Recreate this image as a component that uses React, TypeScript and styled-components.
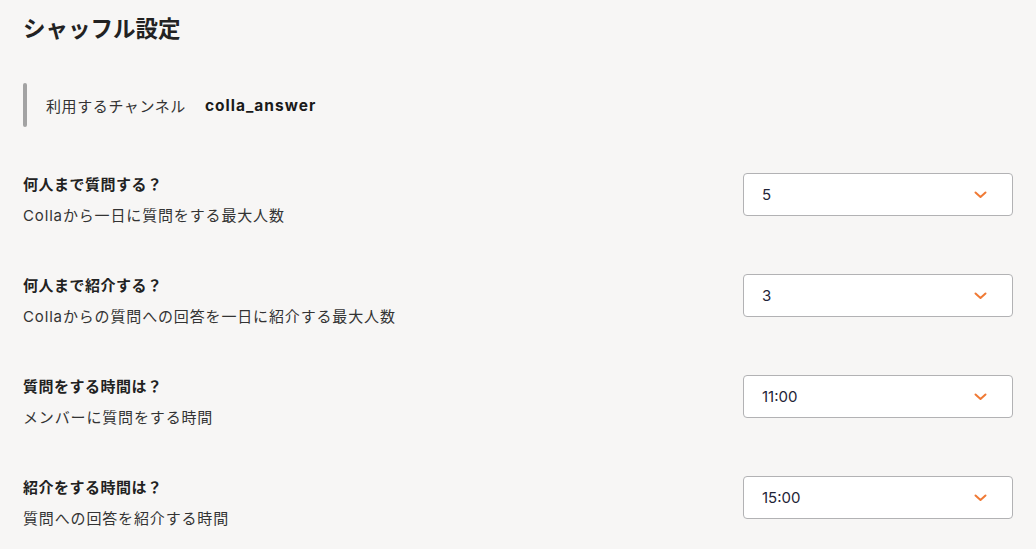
import styled, { createGlobalStyle } from 'styled-components';

const GlobalStyle = createGlobalStyle`
  html, body {
    margin: 0;
    padding: 0;
    background: #f7f6f5;
  }
  body {
    font-family: Inter, "Noto Sans CJK JP", sans-serif;
    color: #222;
  }
`;

const Page = styled.div`
  width: 1036px;
  height: 549px;
  box-sizing: border-box;
  padding: 13px 23px 0 23px;
  background: #f7f6f5;
  overflow: hidden;
`;

const Title = styled.h1`
  margin: 0;
  font-size: 22.5px;
  line-height: 32px;
  font-weight: 700;
  color: #222;
`;

const ChannelInfo = styled.div`
  margin-top: 38px;
  height: 44px;
  display: flex;
  align-items: center;
`;

const ChannelBar = styled.div`
  width: 4px;
  height: 44px;
  border-radius: 2px;
  background: #a3a3a3;
  margin-right: 19px;
`;

const ChannelLabel = styled.span`
  font-size: 15px;
  letter-spacing: 0.6px;
  color: #333;
`;

const ChannelName = styled.span`
  font-size: 15.5px;
  font-weight: 700;
  letter-spacing: 1px;
  color: #1a1a1a;
  margin-left: 19px;
`;

const SettingList = styled.div`
  margin-top: 46px;
  display: flex;
  flex-direction: column;
  gap: 47px;
`;

const SettingRow = styled.div`
  display: flex;
  justify-content: space-between;
  align-items: flex-start;
  height: 54px;
`;

const SettingText = styled.div`
  display: flex;
  flex-direction: column;
  gap: 7px;
`;

const SettingLabel = styled.div`
  font-size: 15px;
  line-height: 24px;
  font-weight: 700;
  letter-spacing: 0.5px;
  color: #222;
`;

const SettingDesc = styled.div`
  font-size: 15px;
  line-height: 24px;
  letter-spacing: 0.85px;
  color: #333;
`;

const Select = styled.div`
  width: 270px;
  height: 43px;
  box-sizing: border-box;
  border: 1px solid #b2b2b4;
  border-radius: 4px;
  background: #fff;
  display: flex;
  align-items: center;
  justify-content: space-between;
  padding: 0 25px 0 18px;
`;

const SelectValue = styled.span`
  font-size: 15px;
  color: #1f2437;
`;

const Chevron = () => (
  <svg width="13" height="8" viewBox="0 0 13 8" fill="none">
    <path d="M1.5 1.5 L6.5 6 L11.5 1.5" stroke="#f07a35" strokeWidth="2" strokeLinecap="round" strokeLinejoin="round" />
  </svg>
);

const settings = [
  { label: '何人まで質問する？', desc: 'Collaから一日に質問をする最大人数', value: '5' },
  { label: '何人まで紹介する？', desc: 'Collaからの質問への回答を一日に紹介する最大人数', value: '3' },
  { label: '質問をする時間は？', desc: 'メンバーに質問をする時間', value: '11:00' },
  { label: '紹介をする時間は？', desc: '質問への回答を紹介する時間', value: '15:00' },
];

export default function App() {
  return (
    <>
      <GlobalStyle />
      <Page>
        <Title>シャッフル設定</Title>
        <ChannelInfo>
          <ChannelBar />
          <ChannelLabel>利用するチャンネル</ChannelLabel>
          <ChannelName>colla_answer</ChannelName>
        </ChannelInfo>
        <SettingList>
          {settings.map((s) => (
            <SettingRow key={s.label}>
              <SettingText>
                <SettingLabel>{s.label}</SettingLabel>
                <SettingDesc>{s.desc}</SettingDesc>
              </SettingText>
              <Select>
                <SelectValue>{s.value}</SelectValue>
                <Chevron />
              </Select>
            </SettingRow>
          ))}
        </SettingList>
      </Page>
    </>
  );
}
